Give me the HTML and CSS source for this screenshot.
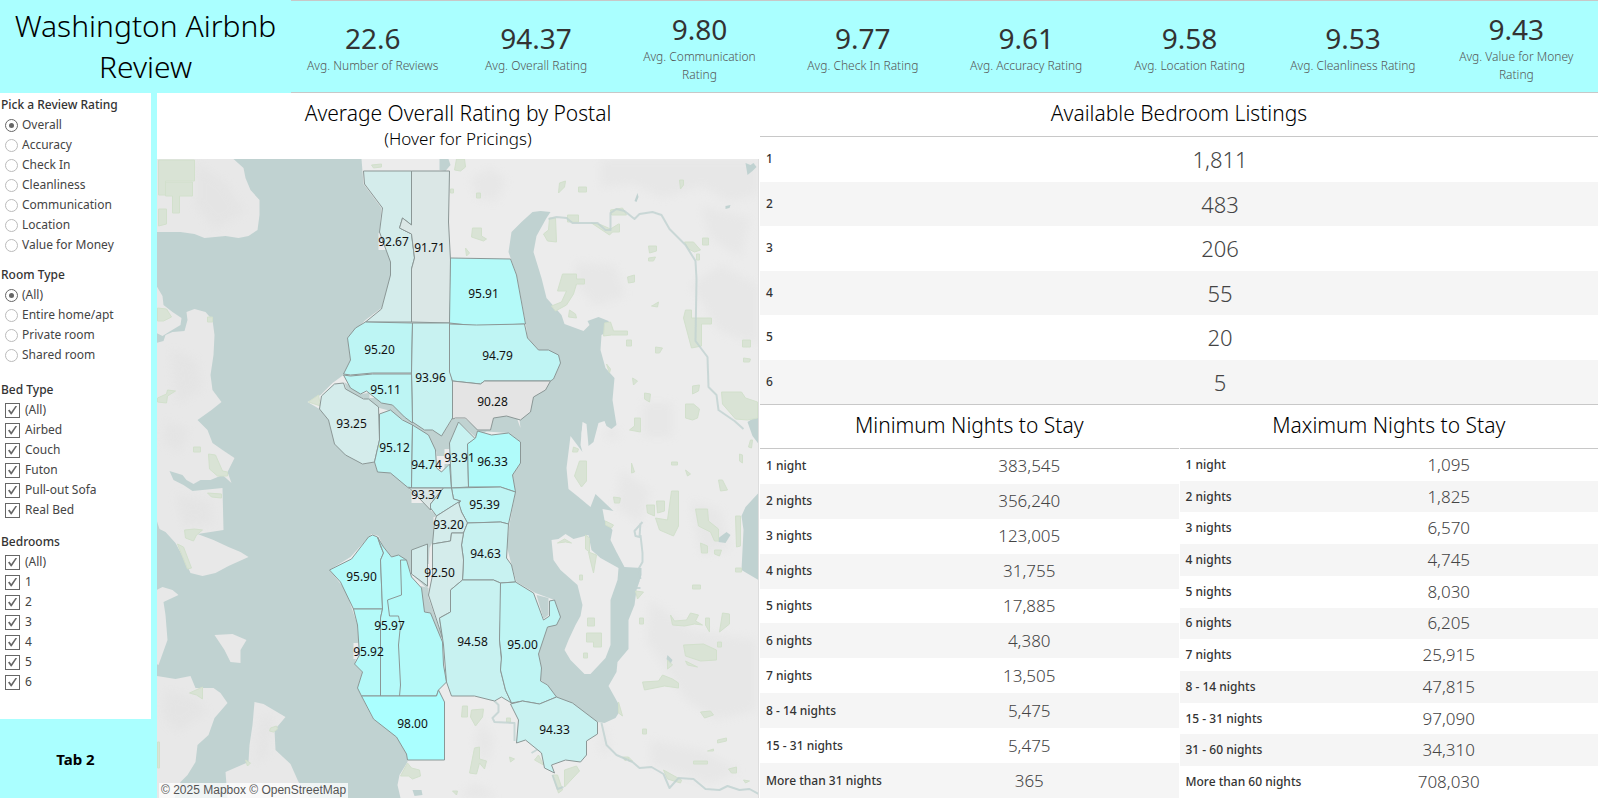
FILE: index.html
```html
<!DOCTYPE html>
<html lang="en">
<head>
<meta charset="utf-8">
<title>Washington Airbnb Review</title>
<link rel="stylesheet" href="styles.css">
</head>
<body>
<div class="dashboard">
  <header class="top">
    <h1 class="top-title">Washington Airbnb Review</h1>
    <ul class="kpis">
      <li class="kpi"><strong>22.6</strong><span>Avg. Number of Reviews</span></li>
      <li class="kpi"><strong>94.37</strong><span>Avg. Overall Rating</span></li>
      <li class="kpi"><strong>9.80</strong><span>Avg. Communication Rating</span></li>
      <li class="kpi"><strong>9.77</strong><span>Avg. Check In Rating</span></li>
      <li class="kpi"><strong>9.61</strong><span>Avg. Accuracy Rating</span></li>
      <li class="kpi"><strong>9.58</strong><span>Avg. Location Rating</span></li>
      <li class="kpi"><strong>9.53</strong><span>Avg. Cleanliness Rating</span></li>
      <li class="kpi"><strong>9.43</strong><span>Avg. Value for Money Rating</span></li>
    </ul>
  </header>

  <aside class="side">
    <form class="filters">
      <fieldset class="group">
        <legend>Pick a Review Rating</legend>
        <label class="opt"><input type="radio" name="rating" checked>Overall</label>
        <label class="opt"><input type="radio" name="rating">Accuracy</label>
        <label class="opt"><input type="radio" name="rating">Check In</label>
        <label class="opt"><input type="radio" name="rating">Cleanliness</label>
        <label class="opt"><input type="radio" name="rating">Communication</label>
        <label class="opt"><input type="radio" name="rating">Location</label>
        <label class="opt"><input type="radio" name="rating">Value for Money</label>
      </fieldset>
      <fieldset class="group">
        <legend>Room Type</legend>
        <label class="opt"><input type="radio" name="room" checked>(All)</label>
        <label class="opt"><input type="radio" name="room">Entire home/apt</label>
        <label class="opt"><input type="radio" name="room">Private room</label>
        <label class="opt"><input type="radio" name="room">Shared room</label>
      </fieldset>
      <fieldset class="group group-checks">
        <legend>Bed Type</legend>
        <label class="opt"><input type="checkbox" checked>(All)</label>
        <label class="opt"><input type="checkbox" checked>Airbed</label>
        <label class="opt"><input type="checkbox" checked>Couch</label>
        <label class="opt"><input type="checkbox" checked>Futon</label>
        <label class="opt"><input type="checkbox" checked>Pull-out Sofa</label>
        <label class="opt"><input type="checkbox" checked>Real Bed</label>
      </fieldset>
      <fieldset class="group group-checks">
        <legend>Bedrooms</legend>
        <label class="opt"><input type="checkbox" checked>(All)</label>
        <label class="opt"><input type="checkbox" checked>1</label>
        <label class="opt"><input type="checkbox" checked>2</label>
        <label class="opt"><input type="checkbox" checked>3</label>
        <label class="opt"><input type="checkbox" checked>4</label>
        <label class="opt"><input type="checkbox" checked>5</label>
        <label class="opt"><input type="checkbox" checked>6</label>
      </fieldset>
    </form>
    <button class="tab-button" type="button">Tab 2</button>
  </aside>

  <section class="map-panel">
    <header class="map-head">
      <h2>Average Overall Rating by Postal</h2>
      <p>(Hover for Pricings)</p>
    </header>
    <div class="map">
      <svg class="map-svg" viewBox="156 159 602 639" preserveAspectRatio="xMidYMid slice" role="img" aria-label="Average overall rating by postal code">
        <defs>
          <filter id="soft" x="-20%" y="-20%" width="140%" height="140%"><feGaussianBlur stdDeviation="5"/></filter>
        </defs>
        <rect class="land" x="156" y="159" width="603" height="639"/>

        <g class="hills" filter="url(#soft)">
          <path d="M600 160h158v34l-30 8-26-16-40 12-30-14-32 4z"/>
          <path d="M470 178l20-10 16 12-10 22-20-4zM575 262l40 4 10 30-30 10-20-22zM690 285l30-20 38 20v60l-40-14zM700 206l50 12-10 40-30-20z"/>
          <path d="M642 403h30v34h-30zM650 600l40 30 66 10v70l-40 10-30-20-40-60zM607 428l12 2-2 10-14-2z"/>
          <path d="M462 792l10-8 14 4 10 10h-34zM598 725l6 0 6 28h-10zM650 740l50 10 40 20-30 14-60-20z"/>
          <path d="M590 560l12 20-4 40-12-20zM480 720l14 20-8 26-12-20z"/>
          <path d="M620 470l30 20-10 34-24-16zM690 500l30 10 10 40-30 4z"/>
        </g>

        <!-- Puget Sound -->
        <path class="water" d="M156 159H361L363 184 381 208 379 231 391 265 390 280 381 308 365 320 347 338 350 360 343 375 332 383 320 395 307 402 319 409 328 420 335 445 362 464 374 462 377 472 390 472 410 490 435 515 433 540 429 548 427 589 411 574 405 560 398 556 391 557 383 547 378 536 371 534 350 557 329 570 345 590 357 625 358 650 354 664 362 672 357 688 363 700 372 718 396 736 407 755 407 762 399 775 397 785 400 798H156Z"/>
        <!-- Lake Washington -->
        <path class="water" d="M532 212L540 211 550 212 546 218 536 236 533 252 541 278 546 298 561 315 564 324 583 331 589 325 587 321 598 317 608 321 610 330 601 335 600 350 605 368 614 378 612 400 616 425 611 429 606 426 604 421 598 423 593 442 588 446 586 424 582 422 580 445 582 452 570 436 566 468 568 489 578 497 590 507 595 494 613 511 602 509 604 520 612 530 610 540 616 552 624 567 641 568 641 575 636 590 634 605 628 620 628 649 617 662 616 672 608 686 618 704 620 710 615 718 604 723 597 722 572 704 556 697 547 685 540 680 541 668 538 654 547 627 560 617 554 600 535 593 516 582 511 565 506 545 509 524 515 492 512 475 520 463 520 442 508 433 478 431 490 430 493 418 506 415 520 420 533 397 553 379 560 363 548 350 538 350 527 338 525 322 516 275 508 252 511 232 521 222Z"/>
        <path class="land" d="M551 540L558 539 565 534 573 539 588 535 591 550 600 558 618 568 617 580 610 600 610 645 605 658 590 674 584 674 570 660 564 650 568 640 575 625 580 616 582 605 577 585 560 570 553 560Z"/>
        <path class="land" d="M517 420l3 8-1-8zM583 422l3 18-4 5-1-12z"/>
        <!-- Ship canal, Lake Union, Duwamish -->
        <path class="water" d="M344 382L360 394 368 393 383 402 391 404 410 420 424 430 433 430 441 436 452 419 465 419 478 430 488 430 476 438 458 422 449 443 449 463 441 472 436 468 436 452 428 435 411 426 390 411 379 408 366 400 346 390Z"/>
        <path class="water" d="M420 586L428 588 428 598 442 638 438 636 430 613 424 612Z"/>
        <!-- Lake Sammamish and ponds -->
        <path class="water" d="M758 493L745 507 741 516 743 530 741 570 758 580ZM758 415L747 422 752 436 758 444ZM745 163l5 2 3-2 3 4-4 4-5 4zM637 193l-3 8 2 1 2-5zM725 206l5-1-1 3-4 1zM448 159h-9v11l6 1 5-6zM718 538l8-6 4 3-5 8-7-1zM667 655l5 5-2 4-4-5zM412 790h9l1 5-8 1z"/>

        <!-- Western shores -->
        <g class="land-west">
          <path d="M156 159H233L243 168 245 178 250 190 259 200 259 215 257 230 248 236 238 238 225 236 204 238 194 234 180 232 156 232Z"/>
          <path d="M156 286L162 296 163 305 172 312 181 318 180 325 170 331 162 336 156 333Z"/>
          <path d="M156 343L163 341 165 335 172 332 184 331 187 320 186 312 194 309 205 312 212 320 214 335 213 355 210 375 212 390 221 402 211 410 197 420 207 430 212 443 222 450 234 458 227 472 231 483 222 475 210 480 200 480 193 484 186 480 182 475 169 471 173 480 183 485 192 491 222 488 223 530 197 534 213 540 228 547 240 552 248 557 228 566 215 573 202 576 190 573 183 558 175 543 165 532 159 529 156 520Z"/>
          <path d="M156 590L162 587 172 590 178 595 163 602 165 615 167 640 158 665 156 664Z"/>
          <path d="M214 635L232 634 246 640 240 650 240 663 230 662 224 650Z"/>
          <path d="M156 676L175 679 190 676 195 688 213 688 220 693 227 703 214 718 208 735 197 745 195 762 187 775 180 782 174 798H156Z"/>
          <path d="M254 702L263 704 285 717 274 730 275 750 290 764 298 782 310 798H227L225 772 248 762 249 745 252 725Z"/>
        </g>
        <g class="hills" filter="url(#soft)">
          <path d="M195 162l30 20 20 30-30 18-20-24zM170 350l26 10 6 30-26 14zM165 420l24 10-10 24-16-12zM175 495l34 6 4 22-30 4zM165 690l30 8 12 14-30 20-14-14zM262 715l10 6-6 34-12 10z"/>
        </g>

        <!-- Parks -->
        <g class="park">
          <path d="M158 160h36v21h-29v14h-7zM165 182h27v14h-13v17h-7v-17h-7zM158 209h8v15l-8 2zM157 308l9 1 5 8-8 4h-6zM207 317h5v5h-5z"/>
          <path d="M157 398l9-4 1-4 8 1-8 5-1 7-9-1zM193 447h7v5h-7zM208 454l7 1 7 16 5 1v4h-10l-8-7zM184 530l10-1 8 1-6 5-3 6-8-3zM177 544l6 3 8 21-4 1zM207 493l14 1v4l-10-1zM189 693l13-6v12l-6-4zM270 728l6-2 1 3-4 3-4-1zM245 760l5 3-3 3zM308 402l10-7 2 11zM157 742h2v26h-2z"/>
          <path d="M456 159h8l1 8-5 4-6-1zM371 165l10-1v3l-8 1zM559 183l6-2-1 6-6 6zM578 187h8v5h-8zM679 180h4v5l-3 4zM472 228h9v8l5 3-3 2-12-4zM465 248l4 5-3 3zM450 189h3v4h-3zM476 193h4v5h-4z"/>
          <path d="M549 218h6l1 24-9-1-4-7 5-4zM567 215h11v7h-11zM591 223l10 2 9 4 8-5h1v8h-7l-3 3zM610 210l12-2 4 7h-15zM562 274h14v5h8v5h-8l-3 10-7 11-11 6-4-5 10-4 5-11h-9zM648 246h8v5l-7 2zM648 258l7-1-2 4h-5zM702 238h6v7h-6zM684 242h9l7 8-6 2-6-3zM696 254h3v6h-3zM627 277l7-2v7l-6 1zM569 310l6 4 1 4-8-1zM653 305l5-3-1 5-6-1zM685 310h6v8h20v6h-10v22l-10 2-8-30z"/>
          <path d="M604 323l6-1 3 9h14v4h-16l-8 1zM626 340h5v6h-5zM655 347l7 1-3 5h-4zM606 364l4 5-1 4zM632 378l5 3-4 4zM644 393l6 1-1 8-5-3zM692 386l7-1-1 6-6 3zM685 404h8l6 5-2 9-5 2-7-2zM634 418h6v14l-11-2 5-4zM742 340h8v7h-8zM743 358l7 1-1 3h-6zM721 392h20l4 6 12 4v16l-10 2-12-1-13-15zM573 447l5 2-1 3h-5zM579 461h7v20l-5 6-7-11zM631 463l3 9-3 1zM671 462h6v3h-6zM685 470l5 4-3 2zM739 454l3 1v8l-3-2zM750 440l2 0-1 8-3-1zM718 480h4l5 10-7 1z"/>
          <path d="M671 491h7v35l-5 10-14-6-4-12 12 2zM656 501h8v10l-7 2zM646 505h8v11l-7-3zM695 509h12l1 12 10 8v12h-4l-4-9-12-6zM735 516h5v30l-4 1zM700 543l7 3v7h-6zM714 550h7l-2 6-5-2zM605 521l8 4-2 3-6-3zM613 497l7 1-1 5h-5zM557 543l7-4 7 4-6-1zM585 535l4 3v14l-4-3zM588 552l8 3-3 18-3-12zM635 591l8 1-6 7zM579 575h3v5h-3zM692 585h8v4h-8zM735 568h6v4h-6z"/>
          <path d="M587 618h7v8h-7zM586 633h15v14h-8v-5h-7zM583 653h4v5h-4zM639 618h4v6h-4zM670 615l4 6 12-1 4-7 8 2-3 6 7 4-8-1-10 2-12-1zM705 618l4 0v14l-4-7zM722 613l7 1v10l-10 8zM683 645l20-1 13 6v10l-16 1-15-5zM717 642h4v5h-4zM667 660l5 5-5 4zM685 661l12 6-10-2zM642 682l16-1 4-6 10 4 6 4v5l-14-2-20 4zM700 712l10-1 3 4-9 3zM642 729h4v5h-4zM618 702l4 14-4-3z"/>
          <path d="M462 706h5v11h-6zM471 710l12-1-1 8-7 9-5-9zM474 748l5-1v12l7 2-2 8-5-6-3 11-7-1zM506 718h4v4h-4zM538 755l5 10-9-5zM509 757l5 2-4 3zM552 775l5 0 5 15-4 3zM564 770l12-4 3 5-15 16zM628 757l4 4h-4zM693 761h14v3h-14zM663 770l18 10-1 3-13-4zM717 740l9-2v3l-9 2zM728 769l8-2v6l-5 0zM743 780l6 1-4 2zM707 751l6-2v2zM407 763l4 5 8 2 1 6-8 3-4-3-8 0zM452 791h5l-1 4zM622 757h6l-3 4z"/>
        </g>
        <g class="river">
          <path d="M548 219l8-2 10 1 6 5 25 0 8 7h5v-17l6-4 8 2 10 8 5-5 13-2 9 3 8 14 16 16 10 16 1 18-1 62 12 16 1 30 8 8 2 15 16 11 9 8"/>
          <path d="M601 723l5 22 10 10 16 7 7 6 12-1 12 7 6 14 9-10 15 1 12 10 14 1 8-4 12 4 10-1 9 5"/>
          <path d="M494 701l4 4v7l-6 6 2 4 20 1v18M531 753l10-6 2 6M552 775l5 14 6-2M642 522l-8 9 1 5 4 1 1-14M640 535l2 18v9l-4 7 2 10M634 582l4-1-3 7 5 0"/>
        </g>

        <!-- Label plates -->
        <path class="plate" d="M378 233h29v17h-29zM411 490h29v13h-29zM436 456h8v15h-8zM444 449h10v15h-10zM353 643h29v16h-29zM427 564h10v18h-10zM369 393h6v5h-6zM433 517h6v12h-6z"/>

        <g class="zone">
          <path class="f2" d="M363 171H411V225L402 218 399 228 411 234 414 258 411 269V322H365L381 309 390 275V262L379 232 382 208 364 184Z"/>
          <path class="f1" d="M411 171H449L448 222 450 260V300L449 323 411 322V269L414 258 411 234 399 228 402 218 411 225Z"/>
          <path class="f6" d="M450 258L510 259 516 275 525 324 476 326 449 323Z"/>
          <path class="f5" d="M365 322L412 323 411 373H372L350 375 343 374 350 360 347 338 355 328Z"/>
          <path class="f3" d="M412 323H449L450 372 452 382V418L441 436 432 430 424 430 412 422 411 373Z"/>
          <path class="f4" d="M449 324L476 325 524 324 527 338 538 350H548L558 355 560 363 553 379 550 381H484L480 384 452 381 449 372Z"/>
          <path class="f0" d="M452 381L480 384 484 381H550L545 390 533 397 530 412 520 420 506 416 493 418 490 430H477L465 418H455L452 419Z"/>
          <path class="f5" d="M343 375L350 376 372 374H411L412 423 404 417 392 405 381 403 366 391 360 394 350 388Z"/>
          <path class="f2" d="M343 383L345 389 363 399H368L378 407 379 440 374 462 362 464 345 455 334 444 328 420 319 409 321 396 334 384Z"/>
          <path class="f5" d="M379 414L390 410 402 420 412 425 411 488H408L390 473 377 472 374 462 379 440Z"/>
          <path class="f4" d="M412 425L428 435 435 450 436 468 441 472 449 464 451 488H411Z"/>
          <path class="f3" d="M458 422L475 439 467 444 468 487 451 488 449 443Z"/>
          <path class="f7" d="M477 431L491 435 508 433 520 442V463L512 475 515 492 500 487H468L467 444 475 438Z"/>
          <path class="f4" d="M451 488L500 487 515 492 508 524 500 522 467 523 461 512 458 504 460 501 453 499Z"/>
          <path class="f1" d="M411 488H443L430 504V510L408 487Z"/>
          <path class="f3" d="M443 488H451L453 499 460 501 436 516 430 508V504Z"/>
          <path class="f2" d="M436 516L458 502 461 512 467 523 463 533H451L450 541 432 544 434 522Z"/>
          <path class="f3" d="M467 523L500 522 508 524 506 558 511 565 515 582 500 583 493 580H462L463 560 461 545 463 533Z"/>
          <path class="f2" d="M432 544L450 541 451 533H463L461 545 463 560 462 580 450 590V612L439 618 442 638 428 595 432 575Z"/>
          <path class="f2" d="M411 550L427 544V586L411 574Z"/>
          <path class="f6" d="M329 570L351 559 368 537 372 535 377 537 380 546 383 553 380 560 382 609H353L340 582Z"/>
          <path class="f6" d="M353 609H382L380 618V696H361L357 688 362 672 354 664 359 655 357 625Z"/>
          <path class="f6" d="M377 537L383 547 391 557 398 555 406 560 411 577 421 588 424 612 430 613 442 642 443 665 446 682 438 690 436 696H380V618L382 609 380 560 383 553Z"/>
          <path class="line" d="M406 560H400L401 595 387 600 389 616H398L400 625 398 645 400 685 399 696"/>
          <path class="f3" d="M462 580H493L500 583 501 600 499 640 501 660 500 670 505 690 511 703 501 697 494 701 474 696H451L446 682 443 645 442 638 439 618 450 612V590Z"/>
          <path class="f4" d="M500 583L515 582 533 593 543 620 549 616V601L554 600 560 617 556 625 547 627 538 654 541 668 540 681 547 685 556 697 539 704 522 701 511 703 505 690 500 670 501 657 499 640Z"/>
          <path class="f3" d="M510 704L522 701 539 704 556 697 572 703 597 722V734L586 741V755L580 762 565 760 551 765 554 773 544 768 541 753 525 740 516 743 518 720Z"/>
          <path class="f8" d="M361 696H436L438 690 444 702V760H407L406 754 396 737 373 719Z"/>
        </g>
        <path class="water" d="M536 595L548 598 548 615 543 619Z"/>

        <g class="zone-label">
          <text x="393" y="246">92.67</text><text x="429" y="252">91.71</text><text x="483" y="298">95.91</text>
          <text x="379" y="354">95.20</text><text x="430" y="382">93.96</text><text x="497" y="360">94.79</text>
          <text x="385" y="394">95.11</text><text x="492" y="406">90.28</text><text x="351" y="428">93.25</text>
          <text x="394" y="452">95.12</text><text x="426" y="469">94.74</text><text x="459" y="462">93.91</text>
          <text x="492" y="466">96.33</text><text x="426" y="499">93.37</text><text x="484" y="509">95.39</text>
          <text x="448" y="529">93.20</text><text x="485" y="558">94.63</text><text x="361" y="581">95.90</text>
          <text x="439" y="577">92.50</text><text x="389" y="630">95.97</text><text x="368" y="656">95.92</text>
          <text x="472" y="646">94.58</text><text x="522" y="649">95.00</text><text x="412" y="728">98.00</text>
          <text x="554" y="734">94.33</text>
        </g>
      </svg>
      <p class="credit"><a href="#mapbox">© 2025 Mapbox</a> <a href="#osm">© OpenStreetMap</a></p>
    </div>
  </section>

  <div class="tables">
    <section class="panel panel-wide">
      <h2>Available Bedroom Listings</h2>
      <table class="bedrooms">
        <tr><th scope="row">1</th><td>1,811</td></tr>
        <tr><th scope="row">2</th><td>483</td></tr>
        <tr><th scope="row">3</th><td>206</td></tr>
        <tr><th scope="row">4</th><td>55</td></tr>
        <tr><th scope="row">5</th><td>20</td></tr>
        <tr><th scope="row">6</th><td>5</td></tr>
      </table>
    </section>
    <section class="panel">
      <h2>Minimum Nights to Stay</h2>
      <table class="nights">
        <tr><th scope="row">1 night</th><td>383,545</td></tr>
        <tr><th scope="row">2 nights</th><td>356,240</td></tr>
        <tr><th scope="row">3 nights</th><td>123,005</td></tr>
        <tr><th scope="row">4 nights</th><td>31,755</td></tr>
        <tr><th scope="row">5 nights</th><td>17,885</td></tr>
        <tr><th scope="row">6 nights</th><td>4,380</td></tr>
        <tr><th scope="row">7 nights</th><td>13,505</td></tr>
        <tr><th scope="row">8 - 14 nights</th><td>5,475</td></tr>
        <tr><th scope="row">15 - 31 nights</th><td>5,475</td></tr>
        <tr><th scope="row">More than 31 nights</th><td>365</td></tr>
      </table>
    </section>
    <section class="panel">
      <h2>Maximum Nights to Stay</h2>
      <table class="nights">
        <tr><th scope="row">1 night</th><td>1,095</td></tr>
        <tr><th scope="row">2 nights</th><td>1,825</td></tr>
        <tr><th scope="row">3 nights</th><td>6,570</td></tr>
        <tr><th scope="row">4 nights</th><td>4,745</td></tr>
        <tr><th scope="row">5 nights</th><td>8,030</td></tr>
        <tr><th scope="row">6 nights</th><td>6,205</td></tr>
        <tr><th scope="row">7 nights</th><td>25,915</td></tr>
        <tr><th scope="row">8 - 14 nights</th><td>47,815</td></tr>
        <tr><th scope="row">15 - 31 nights</th><td>97,090</td></tr>
        <tr><th scope="row">31 - 60 nights</th><td>34,310</td></tr>
        <tr><th scope="row">More than 60 nights</th><td>708,030</td></tr>
      </table>
    </section>
  </div>
</div>
</body>
</html>
```

FILE: styles.css
```css
* { box-sizing: border-box; }

body {
  margin: 0;
  background: #fff;
  color: #333;
  font: 400 12px/18px "Noto Sans", "Open Sans", sans-serif;
}

h1, h2, p, ul { margin: 0; padding: 0; font-weight: 300; }

.dashboard {
  display: grid;
  grid-template-columns: 151px 6px 603fr 838fr;
  grid-template-rows: auto 1fr;
  min-height: 100vh;
  background: #aff;
}

/* Header */
.top {
  grid-column: 1 / -1;
  display: flex;
  min-height: 93px;
}

.top-title {
  width: 291px;
  padding-top: 5px;
  color: #000;
  font-size: 30px;
  line-height: 41px;
  text-align: center;
}

.kpis {
  flex: 1;
  display: grid;
  grid-template-columns: repeat(8, 1fr);
  list-style: none;
  border-top: 1px solid #c8c8c8;
  border-bottom: 1px solid #c8c8c8;
}

.kpi {
  display: flex;
  flex-direction: column;
  justify-content: center;
  padding: 0 12px;
  text-align: center;
}

.kpi strong {
  font-size: 28px;
  font-weight: 400;
  line-height: 38px;
}

.kpi span { color: #555; }

/* Filters */
.side {
  grid-column: 1;
  display: flex;
  flex-direction: column;
}

.filters {
  flex: 1;
  padding: 2px 1px 0;
  background: #fff;
}

.group {
  margin: 0 0 10px;
  padding: 0;
  border: 0;
}

.group + .group-checks { margin-top: 15px; margin-bottom: 12px; }
.group-checks + .group-checks { margin-top: 12px; }

.group legend {
  padding: 0;
  font-weight: 500;
  line-height: 20px;
}

.opt {
  display: flex;
  align-items: center;
  gap: 4px;
  height: 20px;
  padding-left: 4px;
  color: #444;
}

.opt input {
  appearance: none;
  display: grid;
  place-items: center;
  flex: none;
  width: 13px;
  height: 13px;
  margin: 0;
  border: 1px solid #bbb;
  border-radius: 50%;
}

.opt input:checked { border-color: #666; }

.opt input[type="radio"]:checked::after {
  content: "";
  width: 5px;
  height: 5px;
  border-radius: 50%;
  background: #666;
}

.opt input[type="checkbox"] {
  width: 15px;
  height: 15px;
  border-radius: 0;
}

.group-checks .opt { gap: 5px; }

.opt input[type="checkbox"]:checked::after {
  content: "";
  width: 9px;
  height: 9px;
  background: #666;
  clip-path: polygon(0 56%, 16% 44%, 36% 72%, 86% 0, 100% 8%, 40% 100%, 32% 100%);
}

.tab-button {
  height: 79px;
  border: 0;
  background: #aff;
  color: #000;
  font: 700 15px/20px "Noto Sans", "Open Sans", sans-serif;
}

/* Map */
.map-panel {
  grid-column: 3;
  display: flex;
  flex-direction: column;
  padding-right: 1px;
  background: #fff;
}

.map-head {
  height: 66px;
  padding-top: 7px;
  color: #000;
  text-align: center;
}

.map-head h2, .panel h2 {
  color: #000;
  font-size: 21px;
  line-height: 27px;
}

.map-head p {
  font-size: 17px;
  line-height: 24px;
}

.map {
  position: relative;
  flex: 1;
  min-height: 0;
  border-right: 1px solid #ddd;
}

.map-svg { position: absolute; width: 100%; height: 100%; }

.land { fill: #ececec; }
.land-west { fill: #e8e8e8; }
.water { fill: #c0d2d1; }
.hills { fill: #dedede; opacity: .35; }
.park { fill: #d9e3d5; stroke: #d2e0cc; stroke-width: 1; }
.river { fill: none; stroke: #c0d2d1; stroke-width: 2; stroke-linejoin: round; opacity: .8; }
.plate { fill: #ececec; }

.zone { stroke: #8b9796; stroke-width: 1; stroke-linejoin: round; }
.zone .line { fill: none; }
.f0 { fill: #e4e4e4; }
.f1 { fill: #dbe7e6; }
.f2 { fill: #d4eceb; }
.f3 { fill: #c8f2f1; }
.f4 { fill: #bff5f4; }
.f5 { fill: #bdf5f4; }
.f6 { fill: #b4faf9; }
.f7 { fill: #b0fbfa; }
.f8 { fill: #aff; }

.zone-label { fill: #111; font-size: 12px; text-anchor: middle; }

.credit {
  position: absolute;
  left: 2px;
  bottom: 0;
  padding: 0 2px;
  background: rgba(255, 255, 255, .75);
  font: 12px/15px "Liberation Sans", sans-serif;
}

.credit a { color: #555; text-decoration: none; }

/* Tables */
.tables {
  grid-column: 4;
  display: grid;
  grid-template-columns: 1fr 1fr;
  grid-template-rows: 312fr 393fr;
  column-gap: 1px;
  background: #fff;
}

.panel {
  display: grid;
  grid-template-rows: 44px 1fr;
}

.panel-wide {
  grid-column: 1 / -1;
  border-bottom: 1px solid #c8c8c8;
}

.panel h2 {
  padding-top: 7px;
  border-bottom: 1px solid #c8c8c8;
  text-align: center;
}

.panel table {
  width: 100%;
  height: 100%;
  border-collapse: collapse;
  table-layout: fixed;
}

.panel tr:nth-child(even) { background: #f5f5f5; }

.panel th {
  padding: 0 0 0 6px;
  font-weight: 500;
  line-height: 18px;
  text-align: left;
  white-space: nowrap;
}

.panel td {
  padding: 0;
  color: #444;
  font-weight: 300;
  text-align: center;
}

.bedrooms th { width: 82px; }
.bedrooms td { font-size: 22px; line-height: 28px; }
.nights th { width: 120px; }
.nights td { font-size: 17px; line-height: 24px; }
```
